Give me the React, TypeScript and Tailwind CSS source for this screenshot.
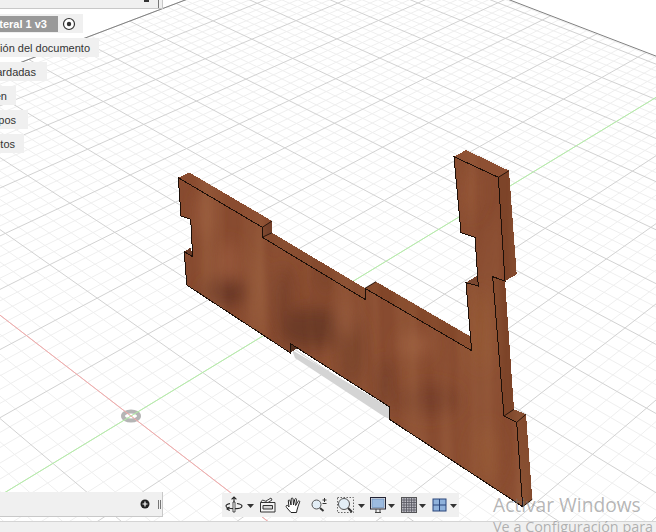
import React from "react";

const A = 0.0429, B = 0.0387;
function P(u: number, v: number): [number, number] {
  const w = 1 + A * u + B * v;
  return [(131 + A * u * 1873 - B * v * 1324) / w, (416 - A * u * 641 - B * v * 704) / w];
}
const UMAX = 11.24, VMAX = 8, UMIN = -9, VMIN = -12;
type L = { k: string; a: [number, number]; b: [number, number] };
const minor: L[] = [], major: L[] = [];
for (let i = Math.round(UMIN * 5); i <= Math.floor(UMAX * 5); i++) {
  const u = i / 5;
  (i % 5 === 0 ? major : minor).push({ k: "u" + i, a: P(u, VMIN), b: P(u, VMAX) });
}
for (let i = Math.round(VMIN * 5); i <= Math.floor(VMAX * 5); i++) {
  const v = i / 5;
  (i % 5 === 0 ? major : minor).push({ k: "v" + i, a: P(UMIN, v), b: P(UMAX, v) });
}
const pts = (a: number[][]) => a.map((p) => p.join(",")).join(" ");

const front = [
  [178.3, 177.7], [262.3, 227.3], [262.3, 237.3], [365, 299.3], [365, 288.3], [471.7, 350.7], [466, 282.7], [478.3, 286],
  [475, 237.3], [461, 232.7], [454, 156.7], [498.3, 177.3], [505, 281], [492.7, 276.7], [504, 416], [516.7, 422.3],
  [522.7, 506.7], [389.3, 419.3], [389.3, 406.7], [290, 343.3], [290, 352.7], [186.7, 285], [184.3, 251.7], [192.7, 256.7],
  [190.7, 219.3], [181, 216],
];
const sides: { p: number[][]; c: string }[] = [
  { p: [[178.3, 177.7], [189, 172.3], [272, 221], [262.3, 227.3]], c: "#8a4c30" },
  { p: [[262.3, 227.3], [272, 221], [272, 232.7], [262.3, 237.3]], c: "#74402a" },
  { p: [[262.3, 237.3], [272, 232.7], [365, 288.3], [365, 299.3]], c: "#854a2e" },
  { p: [[365, 288.3], [376, 281.7], [470.7, 336.7], [471.7, 350.7]], c: "#824629" },
  { p: [[466, 282.7], [478.3, 275], [478.3, 286]], c: "#6f3d29" },
  { p: [[454, 156.7], [466, 150], [509, 170.7], [498.3, 177.3]], c: "#8e5033" },
  { p: [[498.3, 177.3], [509, 170.7], [516.7, 274.3], [505, 281]], c: "#7d4429" },
  { p: [[492.7, 276.7], [505, 281], [514, 409.3], [504, 416]], c: "#7d4429" },
  { p: [[504, 416], [514, 409.3], [526, 414.3], [516.7, 422.3]], c: "#824a2e" },
  { p: [[516.7, 422.3], [526, 414.3], [532.3, 499.3], [522.7, 506.7]], c: "#7d4429" },
  { p: [[184.3, 251.7], [190.7, 247.5], [192.7, 256.7]], c: "#6a3a26" },
  { p: [[290, 343.3], [298, 348], [290, 352.7]], c: "#54301f" },
];
const creases = [
  [365, 288.3, 376, 281.7], [498.3, 177.3, 509, 170.7], [504, 416, 514, 409.3], [516.7, 422.3, 526, 414.3], [522.7, 506.7, 532.3, 499.3],
  [262.3, 227.3, 272, 221], [262.3, 237.3, 272, 232.7],
];
const blobs: [number, number, number, number, string][] = [
  [225, 292, 24, 14, "#6a3925"], [313, 328, 36, 20, "#6c3a25"], [282, 300, 8, 34, "#763f29"], [352, 350, 12, 36, "#723c27"],
  [430, 400, 30, 16, "#784029"], [228, 262, 12, 20, "#96573a"], [205, 215, 8, 22, "#96573a"], [345, 320, 7, 18, "#95563a"],
  [415, 345, 16, 12, "#9a5b3c"], [480, 330, 10, 40, "#90522f"], [486, 455, 14, 30, "#905233"], [470, 190, 9, 26, "#925335"],
  [385, 385, 7, 28, "#754029"], [255, 290, 6, 30, "#8e5134"], [325, 270, 8, 26, "#7c442c"],
];

const Caret = () => (
  <svg width="7" height="4" viewBox="0 0 7 4" className="mt-[1px]"><path d="M0 0h7L3.5 4z" fill="#333" /></svg>
);

const Orbit = () => (
  <svg width="18" height="18" viewBox="0 0 18 18" fill="none" stroke="#222" strokeWidth="1.1">
    <path d="M9 1v15M6.6 3.4 9 1l2.4 2.4" />
    <path d="M12 7.5c3 .5 5 1.500 5 2.500 0 1.700-3.500 2.800-8 2.800s-8-1.100-8-2.800c0-1 1.300-1.900 4-2.400" />
    <path d="M4.500 11 2 13l2.700 1.500" />
    <path d="M8 6h2v10H8z" fill="#fff" strokeWidth=".8" />
  </svg>
);
const Film = () => (
  <svg width="17" height="16" viewBox="0 0 17 16" fill="none" stroke="#333" strokeWidth="1">
    <path d="M1.500 5.500h14.500v9.500H1.500z" fill="#f4f4f4" />
    <path d="M1.500 5.500l2-2.500 4 1.500M7 4l5-3 1 2-4 2.500" stroke="#444" />
    <path d="M4 8.500h9.500v3.500H4z" fill="#d7d7d7" />
  </svg>
);
const HandI = () => (
  <svg width="17" height="17" viewBox="0 0 17 17" fill="#fff" stroke="#222" strokeWidth="1" strokeLinejoin="round">
    <path d="M6 15.500 2 11c-.8-.9-1.300-2 -.5-2.500s1.700.3 2.500 1.500L3.300 4c-.1-1.300 1.500-1.500 1.800-.2L6 8l.2-6c0-1.300 1.800-1.300 1.900 0L8.500 8l1.300-5.700c.3-1.200 1.900-.9 1.700.3L10.600 8.500l2.500-4.200c.7-1 2-.3 1.500.8-1 2.600-2 5.500-2.600 7.900l-.5 2.500z" />
  </svg>
);
const ZoomI = () => (
  <svg width="17" height="16" viewBox="0 0 17 16" fill="none" stroke="#333">
    <circle cx="5.500" cy="7.500" r="4.500" fill="#e3eef6" stroke="#555" />
    <path d="M9 11l3.500 3" strokeWidth="2" />
    <path d="M13.500 1v4M11.500 3h4M11.500 6.500h4" strokeWidth="1" />
  </svg>
);
const Fit = () => (
  <svg width="17" height="17" viewBox="0 0 17 17" fill="none" stroke="#333">
    <rect x=".5" y=".5" width="16" height="15" strokeDasharray="1.500 1.500" stroke="#666" />
    <circle cx="7" cy="7" r="5.500" fill="#e3eef6" stroke="#555" />
    <path d="M11 11l4 4" strokeWidth="2" />
  </svg>
);
const Monitor = () => (
  <svg width="16" height="16" viewBox="0 0 16 16">
    <rect x=".5" y=".5" width="15" height="11.500" fill="#e6e6e6" stroke="#223" />
    <rect x="2" y="2" width="12" height="8.500" fill="#9dbbe0" stroke="#5a7fb0" strokeWidth=".6" />
    <path d="M5 15.500h6M6 12v3.500M10 12v3.500" fill="none" stroke="#444" />
  </svg>
);
const GridI = () => {
  const t = [3, 5.500, 8, 10.500, 13];
  return (
    <svg width="16" height="16" viewBox="0 0 16 16">
      <rect x=".5" y=".5" width="15" height="15" fill="#b9b9c0" stroke="#555" />
      {t.map((a) => (
        <g key={a} stroke="#55555f" strokeWidth=".8">
          <path d={`M${a} 0v16M0 ${a}h16`} />
        </g>
      ))}
    </svg>
  );
};
const Views = () => (
  <svg width="15" height="14" viewBox="0 0 15 14">
    <rect x=".5" y=".5" width="14" height="13" fill="#28457a" />
    <rect x="1.500" y="1.500" width="5.500" height="5" fill="#8fb2dc" />
    <rect x="8" y="1.500" width="5.500" height="5" fill="#8fb2dc" />
    <rect x="1.500" y="7.500" width="5.500" height="5" fill="#8fb2dc" />
    <rect x="8" y="7.500" width="5.500" height="5" fill="#8fb2dc" />
  </svg>
);

const rows = [
  { t: "Configuración del documento", c: "w-[99px] pr-[9px]" },
  { t: "Vistas guardadas", c: "w-[47px] pr-[11px]" },
  { t: "Origen", c: "w-[16px] pr-[9px]" },
  { t: "Cuerpos", c: "w-[28px] pr-[12px]" },
  { t: "Bocetos", c: "w-[24px] pr-[9px]" },
];

export default function App() {
  return (
    <div className="relative w-[656px] h-[532px] overflow-hidden bg-white font-['Liberation_Sans',sans-serif]">
      <svg className="absolute inset-0" width="656" height="532" viewBox="0 0 656 532">
        <defs>
          <clipPath id="face"><polygon points={pts(front)} /></clipPath>
          <clipPath id="sideClip">
            {sides.map((s, i) => <polygon key={i} points={pts(s.p)} />)}
          </clipPath>
          <filter id="soft" x="-50%" y="-50%" width="200%" height="200%"><feGaussianBlur stdDeviation="8" /></filter>
          <filter id="grain" x="0" y="0" width="100%" height="100%">
            <feTurbulence type="fractalNoise" baseFrequency="0.045 0.004" numOctaves="2" seed="4" />
            <feColorMatrix type="matrix" values="0 0 0 0 0.36  0 0 0 0 0.14  0 0 0 0 0.06  2.4 0 0 0 -0.9" />
            <feGaussianBlur stdDeviation="1.5" />
          </filter>
        </defs>
        <g stroke="#efefef" strokeWidth="1">
          {minor.map((l) => <line key={l.k} x1={l.a[0]} y1={l.a[1]} x2={l.b[0]} y2={l.b[1]} />)}
        </g>
        <g stroke="#d2d2d2" strokeWidth="1">
          {major.map((l) => <line key={l.k} x1={l.a[0]} y1={l.a[1]} x2={l.b[0]} y2={l.b[1]} />)}
        </g>
        <ellipse cx="131" cy="416" rx="8" ry="4.500" fill="none" stroke="#b5b5b5" strokeWidth="4" />
        <line x1={P(UMIN, 0)[0]} y1={P(UMIN, 0)[1]} x2={P(UMAX, 0)[0]} y2={P(UMAX, 0)[1]} stroke="#b4f2a6" />
        <line x1={P(0, VMIN)[0]} y1={P(0, VMIN)[1]} x2={P(0, VMAX)[0]} y2={P(0, VMAX)[1]} stroke="#f6a9a9" />
        <line x1={P(UMIN, VMAX)[0]} y1={P(UMIN, VMAX)[1]} x2={P(UMAX, VMAX)[0]} y2={P(UMAX, VMAX)[1]} stroke="#808080" />
        <line x1={P(UMAX, VMIN)[0]} y1={P(UMAX, VMIN)[1]} x2={P(UMAX, VMAX)[0]} y2={P(UMAX, VMAX)[1]} stroke="#808080" />

        <polygon points="292,350 389.300,407 389.300,419 384,416.500 295,358" fill="#d4d4d4" />
        {sides.map((s, i) => (
          <polygon key={i} points={pts(s.p)} fill={s.c} shapeRendering="crispEdges" />
        ))}
        <g clipPath="url(#sideClip)">
          <rect x="170" y="145" width="370" height="365" filter="url(#grain)" opacity="0.5" />
        </g>
        {creases.map((c, i) => (
          <line key={i} x1={c[0]} y1={c[1]} x2={c[2]} y2={c[3]} stroke="#2a160c" strokeWidth="1" />
        ))}
        <polygon points={pts(front)} fill="#884b30" />
        <g clipPath="url(#face)">
          <g filter="url(#soft)">
            {blobs.map((b, i) => <ellipse key={i} cx={b[0]} cy={b[1]} rx={b[2]} ry={b[3]} fill={b[4]} />)}
          </g>
          <rect x="170" y="150" width="370" height="365" filter="url(#grain)" opacity="0.55" />
        </g>
        <polygon points={pts(front)} fill="none" stroke="#1c0f08" strokeWidth="1" shapeRendering="crispEdges" />
      </svg>

      {/* document browser */}
      <div className="absolute left-0 top-0 w-[163px] h-[9px] bg-[#f0f0f0] border-b border-r border-[#c8c8c8] flex items-start justify-end">
        <div className="w-[5px] h-[2px] bg-[#333] mr-[9px]" />
        <div className="w-[1px] h-[8px] bg-[#777] mr-[3px]" />
      </div>
      <div className="absolute left-0 top-[14px] flex flex-col gap-[5px] text-[11px] leading-[20px] text-[#333]">
        <div className="w-[83px] h-[19px] bg-[#f0f0f0] flex items-center">
          <div className="w-[58px] h-[16px] bg-[#999999] flex justify-end overflow-hidden whitespace-nowrap font-bold text-white leading-[16px] pr-[11px]">
            <span className="shrink-0">Lateral 1 v3</span>
          </div>
          <svg width="14" height="14" viewBox="0 0 14 14" className="ml-[4px]">
            <circle cx="7" cy="7" r="5.500" fill="#fff" stroke="#333" strokeWidth="1.200" />
            <circle cx="7" cy="7" r="2.200" fill="#333" />
          </svg>
        </div>
        {rows.map((r) => (
          <div key={r.t} className={`${r.c} h-[19px] bg-[#f0f0f0] flex justify-end overflow-hidden whitespace-nowrap`}>
            <span className="shrink-0">{r.t}</span>
          </div>
        ))}
      </div>

      {/* timeline bar */}
      <div className="absolute left-0 top-[492px] w-[163px] h-[25px] bg-[#f0f0f0] border-b border-r border-[#c8c8c8] flex items-center justify-end">
        <svg width="10" height="10" viewBox="0 0 10 10" className="mr-[8px]">
          <circle cx="5" cy="5" r="4.500" fill="#222" />
          <path d="M5 2.500v5M2.500 5h5" stroke="#fff" strokeWidth="1.200" />
        </svg>
        <div className="w-[3px] h-[9px] border-l border-r border-[#777] mr-[1px]" />
      </div>

      {/* navigation toolbar */}
      <div className="absolute left-[222px] top-[493px] w-[237px] h-[24px] bg-[#f0f0f0] flex items-center pl-[3px]">
        <Orbit /><div className="ml-[4px]"><Caret /></div>
        <div className="ml-[5px]"><Film /></div>
        <div className="ml-[9px]"><HandI /></div>
        <div className="ml-[9px]"><ZoomI /></div>
        <div className="ml-[9px]"><Fit /></div>
        <div className="ml-[4px]"><Caret /></div>
        <div className="ml-[5px]"><Monitor /></div>
        <div className="ml-[2px]"><Caret /></div>
        <div className="ml-[6px]"><GridI /></div>
        <div className="ml-[2px]"><Caret /></div>
        <div className="ml-[6px]"><Views /></div>
        <div className="ml-[3px]"><Caret /></div>
      </div>

      {/* status strip */}
      <div className="absolute left-0 top-[521px] w-[656px] h-[11px] bg-[#f0f0f0] border-t border-[#d4d4d4]" />

      {/* watermark */}
      <div className="absolute left-[493px] top-[493px] whitespace-nowrap font-['Open_Sans',sans-serif] text-[rgba(120,120,120,0.55)]">
        <div className="text-[19.2px] leading-[24px]">Activar Windows</div>
        <div className="text-[14.4px] leading-[18px] mt-[1px]">Ve a Configuración para</div>
      </div>
    </div>
  );
}
